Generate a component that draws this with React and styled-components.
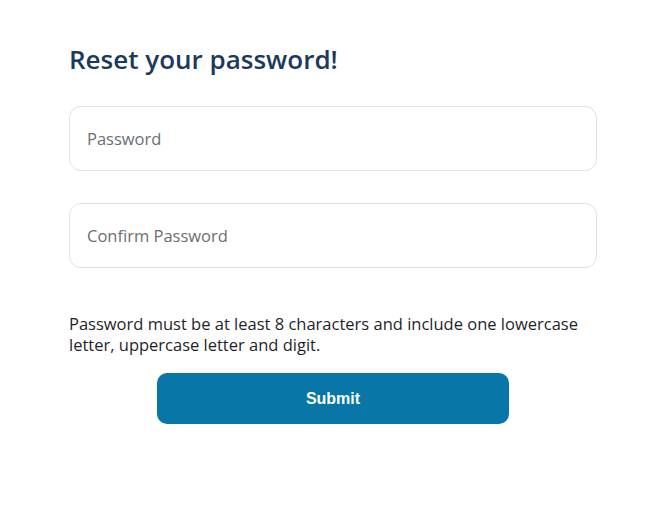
import React from 'react'
import styled, {createGlobalStyle} from 'styled-components'

const GlobalStyle = createGlobalStyle`
	* {
		box-sizing: border-box;
	}
	body {
		margin: 0;
		background: #ffffff;
		font-family: 'Open Sans', 'Liberation Sans', sans-serif;
	}
`

const Page = styled.main`
	padding: 42px 0 0 69px;
`

const Form = styled.form`
	width: 528px;
	display: flex;
	flex-direction: column;
`

const Title = styled.h1`
	margin: 0 0 30px;
	font-size: 26px;
	line-height: 34px;
	font-weight: 600;
	color: #1c3a5c;
`

const Field = styled.input`
	height: 65px;
	width: 100%;
	margin-bottom: ${p => p.$gap || 0}px;
	padding: 0 17px;
	border: 1px solid #dbe1ea;
	border-radius: 12px;
	font-family: 'Open Sans', 'Liberation Sans', sans-serif;
	font-size: 16.5px;
	color: #333;
	outline: none;
	&::placeholder {
		color: #6b6e73;
	}
`

const Hint = styled.p`
	margin: 0 0 18px;
	font-size: 16.5px;
	line-height: 21px;
	color: #1f1f2a;
`

const Submit = styled.button`
	align-self: center;
	width: 352px;
	height: 51px;
	border: none;
	border-radius: 10px;
	background: #0877a8;
	color: #ffffff;
	font-family: 'Liberation Sans', Arial, sans-serif;
	font-size: 16px;
	font-weight: 700;
	cursor: pointer;
`

const App = () => (
	<Page>
		<GlobalStyle />
		<Form onSubmit={e => e.preventDefault()}>
			<Title>Reset your password!</Title>
			<Field type="password" placeholder="Password" $gap={32} />
			<Field type="password" placeholder="Confirm Password" $gap={45} />
			<Hint>
				Password must be at least 8 characters and include one lowercase
				letter, uppercase letter and digit.
			</Hint>
			<Submit type="submit">Submit</Submit>
		</Form>
	</Page>
)

export default App
